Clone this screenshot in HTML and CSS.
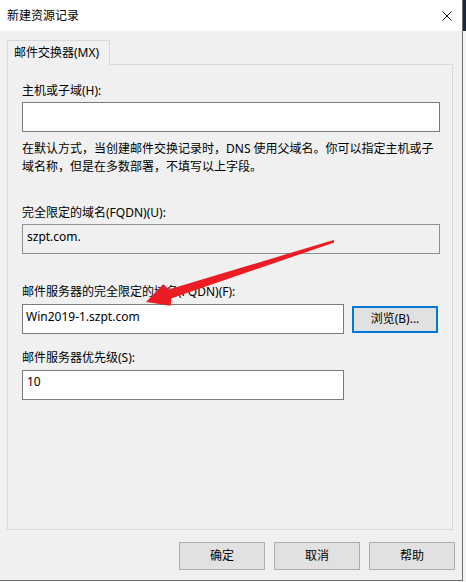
FILE: index.html
```html
<!DOCTYPE html>
<html lang="zh-CN">
<head>
<meta charset="utf-8">
<title>新建资源记录</title>
<link rel="stylesheet" href="styles.css">
</head>
<body>
<div class="dialog">
  <div class="titlebar">
    <span class="title">新建资源记录</span>
    <svg class="close" width="10" height="10" viewBox="0 0 10 10"><path d="M0.5 0.5 L9.5 9.5 M9.5 0.5 L0.5 9.5" stroke="#111" stroke-width="1" fill="none"/></svg>
  </div>
  <div class="client">
    <div class="tabs"><div class="tab">邮件交换器(MX)</div></div>
    <div class="pane">
      <div class="label l1">主机或子域(H):</div>
      <div class="edit wide"></div>
      <p class="desc">在默认方式，当创建邮件交换记录时，DNS 使用父域名。你可以指定主机或子<br>域名称，但是在多数部署，不填写以上字段。</p>
      <div class="label l2">完全限定的域名(FQDN)(U):</div>
      <div class="edit wide ro">szpt.com.</div>
      <div class="label l3">邮件服务器的完全限定的域名(FQDN)(F):</div>
      <div class="row">
        <div class="edit mid">Win2019-1.szpt.com</div>
        <button class="btn browse">浏览(B)...</button>
      </div>
      <div class="label l4">邮件服务器优先级(S):</div>
      <div class="edit mid">10</div>
    </div>
    <div class="buttons">
      <button class="btn">确定</button>
      <button class="btn">取消</button>
      <button class="btn">帮助</button>
    </div>
  </div>
  <svg class="arrow" width="463" height="581" viewBox="0 0 463 581">
    <polygon points="333.6,240 168.6,289.5 163.4,284.3 146,302 170.6,305.7 171.6,298.3 334.4,242.4" fill="#ec1c24"/>
  </svg>
</div>
</body>
</html>
```

FILE: styles.css
```css
* { box-sizing: border-box; }
html, body { margin: 0; padding: 0; }
body {
  width: 466px;
  height: 582px;
  overflow: hidden;
  background: linear-gradient(to bottom, #1d2838 0, #1d2838 31px, #f4f4f4 31px);
  font-family: "Noto Sans", "Noto Sans CJK SC", sans-serif;
  font-size: 12px;
  color: #000;
}
.dialog {
  position: relative;
  width: 463px;
  height: 581px;
  border-right: 1px solid #6e6e6e;
  border-bottom: 1px solid #6e6e6e;
  background: #f0f0f0;
}
.titlebar {
  height: 31px;
  background: #fff;
  display: flex;
  align-items: center;
  justify-content: space-between;
  padding: 0 10px 0 7px;
}
.title { line-height: 18px; }
.close { display: block; }
.client {
  height: 549px;
  padding: 9px 9px 0 7px;
  background: #f0f0f0;
}
.tabs { display: flex; }
.tab {
  position: relative;
  z-index: 1;
  width: 103px;
  height: 25px;
  margin-bottom: -1px;
  padding-left: 6px;
  line-height: 24px;
  background: #f0f0f0;
  border: 1px solid #d9d9d9;
  border-bottom: none;
}
.pane {
  height: 466px;
  border: 1px solid #d9d9d9;
  padding: 0 12px 0 14px;
  background: #f0f0f0;
}
.label { line-height: 18px; }
.l1 { margin-top: 17px; }
.l2 { margin-top: 28px; }
.l3 { margin-top: 29px; }
.l4 { margin-top: 15px; }
.edit {
  margin-top: 2px;
  height: 30px;
  background: #fff;
  border: 1px solid #7a7a7a;
  padding: 3px 4px 0 4px;
  line-height: 18px;
}
.edit.wide { width: 418px; }
.edit.mid { width: 322px; }
.l4 + .edit { margin-top: 3px; padding-top: 2px; }
.edit.ro { background: #f0f0f0; border-color: #8f8f8f; }
.desc {
  margin: 8px 0 0 0;
  line-height: 18px;
}
.row {
  margin-top: 3px;
  display: flex;
  align-items: center;
  gap: 8px;
}
.row .edit { margin-top: 0; padding-left: 3px; }
.btn {
  font: inherit;
  color: #000;
  width: 86px;
  height: 28px;
  padding: 0;
  background: #e1e1e1;
  border: 1px solid #adadad;
  border-radius: 0;
  line-height: 18px;
}
.btn.browse {
  height: 27px;
  border: 2px solid #0078d7;
}
.buttons {
  margin-top: 12px;
  margin-right: -2px;
  display: flex;
  justify-content: flex-end;
  gap: 9px;
}
.arrow {
  position: absolute;
  left: 0;
  top: 0;
  pointer-events: none;
}
```
